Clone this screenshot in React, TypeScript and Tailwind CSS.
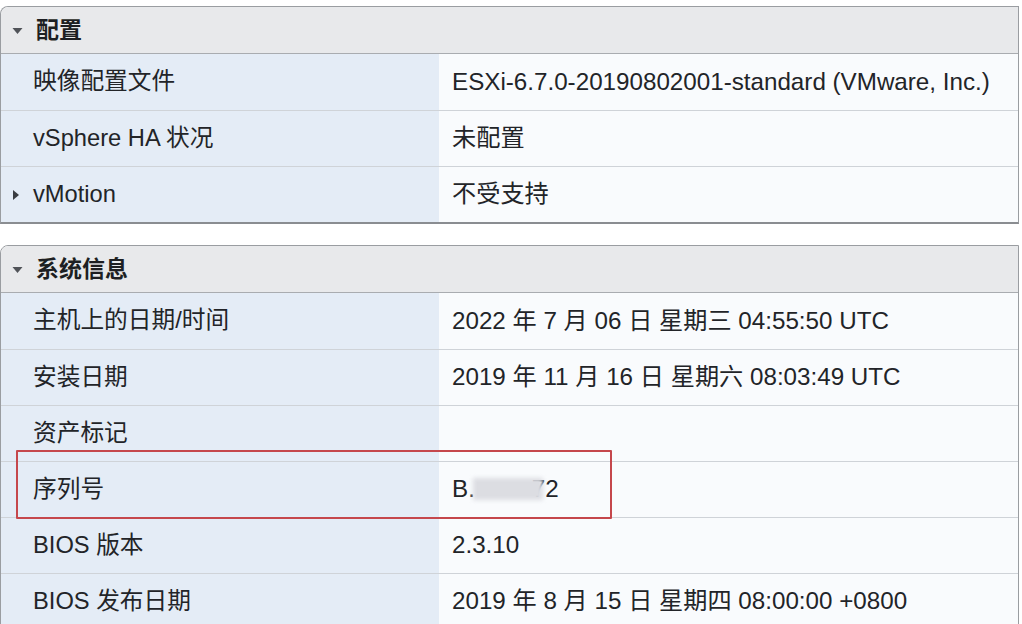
import React from "react";

const font = { fontFamily: '"Liberation Sans", Arial, "Noto Sans CJK SC", sans-serif' };

function Row({ label, value, arrow, first }: { label: string; value: React.ReactNode; arrow?: boolean; first?: boolean }) {
  return (
    <div className={`flex h-[56px] ${first ? "" : "border-t border-[#cfd3d8]"}`}>
      <div className="w-[438px] shrink-0 bg-[#e4ecf6] flex items-center relative pl-[32px]">
        {arrow && (
          <svg className="absolute left-[11px] top-[22px]" width="8" height="12" viewBox="0 0 8 12">
            <path d="M1 1 L7 6 L1 11 Z" fill="#3a3d42" />
          </svg>
        )}
        <span className="text-[23.7px] text-[#222428]">{label}</span>
      </div>
      <div className="flex-1 bg-[#f9fbfd] flex items-center pl-[13px]">
        <span className="text-[24.2px] text-[#222428]">{value}</span>
      </div>
    </div>
  );
}

function Header({ title }: { title: string }) {
  return (
    <div className="h-[47px] bg-[#e8e9eb] border-b border-[#a9acb0] flex items-center relative pl-[35px] rounded-tl-[7px]">
      <svg className="absolute left-[11px] top-[20px]" width="11" height="8" viewBox="0 0 11 8">
        <path d="M0.5 1 L10.5 1 L5.5 7 Z" fill="#505358" />
      </svg>
      <span className="text-[23px] font-bold text-[#1d1f22]">{title}</span>
    </div>
  );
}

export default function App() {
  return (
    <div className="w-[1022px] h-[624px] bg-white overflow-hidden relative" style={font}>
      <div className="pt-[6px] pr-[3px]">
        <div className="border border-[#9a9da1] border-b-2 border-b-[#8a8d91] rounded-tl-[8px] overflow-hidden">
          <Header title="配置" />
          <Row first label="映像配置文件" value="ESXi-6.7.0-20190802001-standard (VMware, Inc.)" />
          <Row label="vSphere HA 状况" value="未配置" />
          <Row label="vMotion" arrow value="不受支持" />
        </div>
        <div className="h-[21px]" />
        <div className="border border-[#9a9da1] rounded-tl-[8px] overflow-hidden">
          <Header title="系统信息" />
          <Row first label="主机上的日期/时间" value="2022 年 7 月 06 日 星期三 04:55:50 UTC" />
          <Row label="安装日期" value="2019 年 11 月 16 日 星期六 08:03:49 UTC" />
          <Row label="资产标记" value="" />
          <Row
            label="序列号"
            value={
              <span className="inline-flex items-center">
                B.
                <span className="inline-block w-[70px] h-[22px] bg-[#dcdde2] blur-[2px] mx-[-2px] relative z-10" />
                <span className="ml-[-9px]">72</span>
              </span>
            }
          />
          <Row label="BIOS 版本" value="2.3.10" />
          <Row label="BIOS 发布日期" value="2019 年 8 月 15 日 星期四 08:00:00 +0800" />
        </div>
      </div>
      <div className="absolute left-[16px] top-[450px] w-[596px] h-[69px] border-2 border-[#c5474c] rounded-[1px] pointer-events-none" />
    </div>
  );
}
